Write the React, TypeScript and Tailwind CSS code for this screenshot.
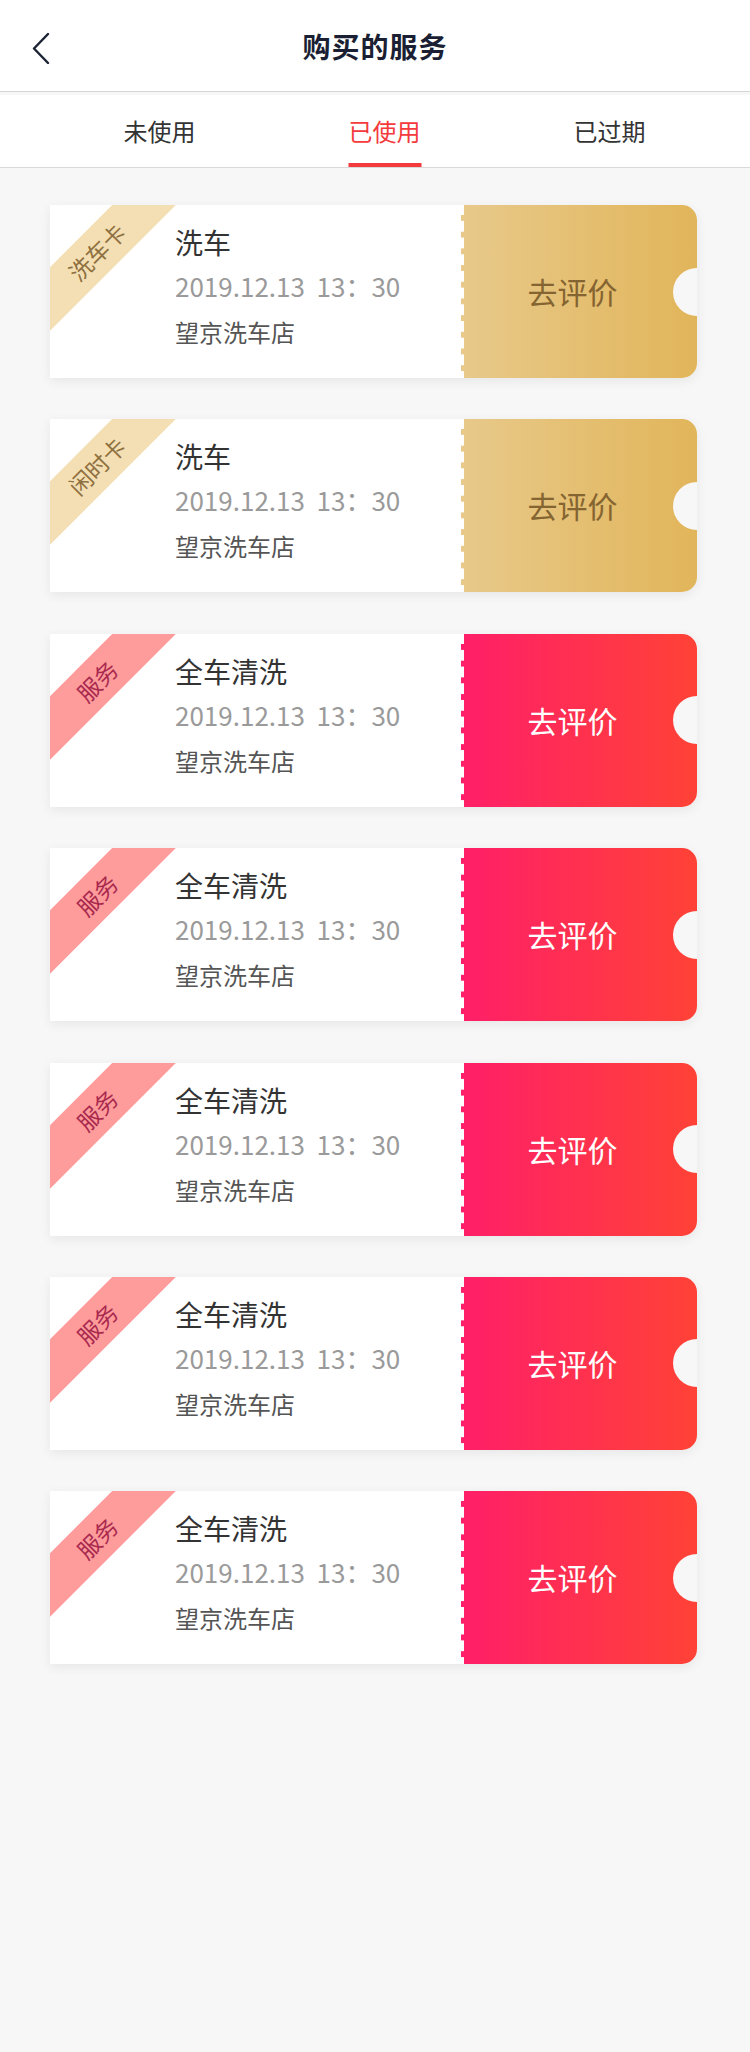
import React from 'react';

type Ticket = {
  tag: string;
  title: string;
  gold: boolean;
};

const tickets: Ticket[] = [
  { tag: '洗车卡', title: '洗车', gold: true },
  { tag: '闲时卡', title: '洗车', gold: true },
  { tag: '服务', title: '全车清洗', gold: false },
  { tag: '服务', title: '全车清洗', gold: false },
  { tag: '服务', title: '全车清洗', gold: false },
  { tag: '服务', title: '全车清洗', gold: false },
  { tag: '服务', title: '全车清洗', gold: false },
];

const TicketCard = ({ item }: { item: Ticket }) => {
  return (
    <div className="relative flex h-[173px] w-[647px] ml-[50px] rounded-r-[15px] overflow-hidden bg-white shadow-[0_3px_12px_rgba(0,0,0,0.07)]">
      {/* left info */}
      <div className="relative w-[411px] h-full overflow-hidden bg-white pl-[125px] pt-[17px]">
        {item.gold ? (
          <div className="absolute left-[47px] top-[47px] w-[220px] h-[45px] -translate-x-1/2 -translate-y-1/2 -rotate-45 bg-[#f3dfb3] flex items-center justify-center text-[23px] text-[#8f7040]">
            {item.tag}
          </div>
        ) : (
          <div className="absolute left-[47px] top-[47px] w-[220px] h-[45px] -translate-x-1/2 -translate-y-1/2 -rotate-45 bg-[#fe9b9b] flex items-center justify-center text-[23px] text-[#a8294e]">
            {item.tag}
          </div>
        )}
        <div className="text-[28px] leading-[40px] text-[#333333]">{item.title}</div>
        <div className="mt-[6px] text-[26px] leading-[36px] text-[#9a9a9a] whitespace-pre">2019.12.13  13：30</div>
        <div className="mt-[10px] text-[24px] leading-[36px] text-[#555555]">望京洗车店</div>
      </div>

      {/* perforation */}
      {item.gold ? (
        <div className="w-[3px] h-full bg-white bg-[linear-gradient(to_bottom,#e8c98a_6px,transparent_6px)] bg-[length:3px_16.7px] bg-[position:0_10px]" />
      ) : (
        <div className="w-[3px] h-full bg-white bg-[linear-gradient(to_bottom,#ff1f68_6px,transparent_6px)] bg-[length:3px_16.7px] bg-[position:0_10px]" />
      )}

      {/* action */}
      {item.gold ? (
        <div className="relative flex-1 h-full flex items-center justify-center pr-4 bg-[linear-gradient(to_right,#e8c98a,#e1b55a)] text-[30px] text-[#846430]">
          去评价
          <div className="absolute right-[-24px] top-1/2 -translate-y-1/2 w-[48px] h-[48px] rounded-full bg-[#f7f7f7]" />
        </div>
      ) : (
        <div className="relative flex-1 h-full flex items-center justify-center pr-4 bg-[linear-gradient(to_right,#ff1f68,#ff4236)] text-[30px] text-white">
          去评价
          <div className="absolute right-[-24px] top-1/2 -translate-y-1/2 w-[48px] h-[48px] rounded-full bg-[#f7f7f7]" />
        </div>
      )}
    </div>
  );
};

export default function App() {
  return (
    <div className="min-h-[2052px] w-[750px] bg-[#f7f7f7] font-['Noto_Sans_CJK_SC','Noto_Sans',sans-serif]">
      {/* header */}
      <div className="relative h-[92px] bg-white border-b border-[#d6d6d6] flex items-center justify-center">
        <button className="absolute left-[30px] top-[31px] w-[22px] h-[34px] flex items-center justify-center">
          <svg width="20" height="32" viewBox="0 0 20 32" fill="none">
            <polyline points="17,2 3,16.5 17,31" stroke="#1a2233" strokeWidth="2.4" strokeLinecap="round" strokeLinejoin="round" />
          </svg>
        </button>
        <h1 className="text-[28px] font-semibold text-[#1b1f33] tracking-[1px]">购买的服务</h1>
      </div>

      {/* tabs */}
      <div className="mt-[3px] h-[73px] bg-white border-b border-[#d9d9d9] grid grid-cols-3 pl-[47px] pr-[28px]">
        <div className="flex items-center justify-center text-[24px] text-[#333333]">未使用</div>
        <div className="relative flex items-center justify-center text-[24px] text-[#f43a3c]">
          已使用
          <div className="absolute bottom-0 left-1/2 -translate-x-1/2 w-[73px] h-[4px] bg-[#f43a3c]" />
        </div>
        <div className="flex items-center justify-center text-[24px] text-[#333333]">已过期</div>
      </div>

      {/* list */}
      <div className="pt-[37px] pb-10 flex flex-col gap-[41.4px]">
        {tickets.map((t, i) => (
          <TicketCard key={i} item={t} />
        ))}
      </div>
    </div>
  );
}
